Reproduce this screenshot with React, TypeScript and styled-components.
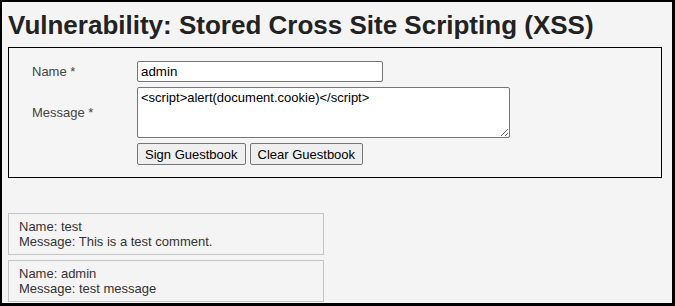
import React from "react";
import styled, { createGlobalStyle } from "styled-components";

const Global = createGlobalStyle`
  html, body { margin: 0; padding: 0; background: #000; }
  body { font-family: "Liberation Sans", Arial, sans-serif; }
  * { box-sizing: border-box; }
`;

const Frame = styled.div`
  width: 675px;
  height: 306px;
  border-style: solid;
  border-color: #000;
  border-width: 2px 3px 3px 2px;
  background: #f4f4f4;
  overflow: hidden;
  padding: 0 0 0 6px;
  color: #333;
`;

const Title = styled.h1`
  margin: 0;
  padding-top: 6px;
  font-size: 26px;
  line-height: 34px;
  font-weight: bold;
  color: #222;
  white-space: nowrap;
`;

const FormBox = styled.div`
  margin-top: 5px;
  width: 654px;
  border: 1px solid #000;
  background: #f5f5f5;
  padding: 13px 0 12px 23px;
`;

const Row = styled.div<{ $gap?: number }>`
  display: flex;
  align-items: center;
  margin-bottom: ${(p) => p.$gap ?? 0}px;
`;

const Label = styled.div`
  width: 105px;
  font-size: 13px;
  color: #444;
`;

const TextInput = styled.input`
  width: 246px;
  height: 21px;
  border: 1px solid #767676;
  border-radius: 2px;
  background: #fff;
  font: 13.33px "Liberation Sans", Arial, sans-serif;
  color: #000;
  padding: 1px 3px;
  outline: none;
`;

const TextArea = styled.textarea`
  width: 373px;
  height: 51px;
  border: 1px solid #767676;
  border-radius: 2px;
  background: #fff;
  font: 13px "Liberation Sans", Arial, sans-serif;
  color: #000;
  padding: 2px 3px;
  resize: both;
  outline: none;
`;

const Buttons = styled.div`
  display: flex;
  gap: 4px;
  margin-left: 105px;
`;

const Button = styled.button`
  height: 22px;
  padding: 0 7px;
  border: 1px solid #767676;
  border-radius: 2px;
  background: #efefef;
  font: 13px "Liberation Sans", Arial, sans-serif;
  color: #000;
`;

const Entries = styled.div`
  margin-top: 35px;
  display: flex;
  flex-direction: column;
  gap: 5px;
`;

const Entry = styled.div`
  width: 316px;
  border: 1px solid #c4c4c4;
  padding: 5px 10px 5px 10px;
  font-size: 13px;
  line-height: 15px;
  color: #333;
`;

export default function App() {
  return (
    <>
      <Global />
      <Frame>
        <Title>Vulnerability: Stored Cross Site Scripting (XSS)</Title>
        <FormBox>
          <Row $gap={5}>
            <Label>Name *</Label>
            <TextInput defaultValue="admin" />
          </Row>
          <Row $gap={5}>
            <Label>Message *</Label>
            <TextArea defaultValue="<script>alert(document.cookie)</script>" />
          </Row>
          <Buttons>
            <Button>Sign Guestbook</Button>
            <Button>Clear Guestbook</Button>
          </Buttons>
        </FormBox>
        <Entries>
          <Entry>
            Name: test
            <br />
            Message: This is a test comment.
          </Entry>
          <Entry>
            Name: admin
            <br />
            Message: test message
          </Entry>
        </Entries>
      </Frame>
    </>
  );
}
